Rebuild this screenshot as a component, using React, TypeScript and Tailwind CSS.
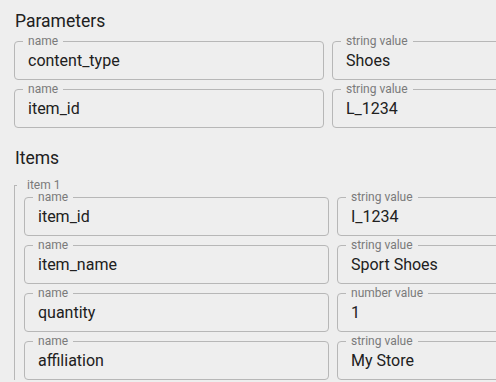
import React from 'react';

type Row = { name: string; kind: string; value: string };

const params: Row[] = [
  { name: 'content_type', kind: 'string value', value: 'Shoes' },
  { name: 'item_id', kind: 'string value', value: 'L_1234' },
];

const item: Row[] = [
  { name: 'item_id', kind: 'string value', value: 'I_1234' },
  { name: 'item_name', kind: 'string value', value: 'Sport Shoes' },
  { name: 'quantity', kind: 'number value', value: '1' },
  { name: 'affiliation', kind: 'string value', value: 'My Store' },
];

// outlined box with the label sitting in the top border
const Field: React.FC<{ label: string; value: string; width: string }> = ({ label, value, width }) => (
  <fieldset className={`${width} shrink-0 rounded-[4px] border border-[#b7b7b7] pl-[7px] pr-2 pt-[2px] pb-[6px]`}>
    <legend className="ml-px px-[5px] text-[12px] leading-[12px] text-[#7a7a7a]">{label}</legend>
    <div className="pl-[6px] text-[16px] leading-6 text-[#202020] whitespace-nowrap">{value}</div>
  </fieldset>
);

const Rows: React.FC<{ rows: Row[]; nameW: string; valueW: string }> = ({ rows, nameW, valueW }) => (
  <div className="flex flex-col gap-[3px]">
    {rows.map((r) => (
      <div key={r.name} className="flex gap-2">
        <Field label="name" value={r.name} width={nameW} />
        <Field label={r.kind} value={r.value} width={valueW} />
      </div>
    ))}
  </div>
);

export default function App() {
  return (
    <div
      className="h-[382px] w-[496px] overflow-hidden bg-[#eeeeee] pl-[14px] pt-[9px]"
      style={{ fontFamily: 'Roboto, "Liberation Sans", sans-serif' }}
    >
      <h2 className="pl-px text-[17.5px] leading-6 text-[#202020]">Parameters</h2>
      <div className="mt-[2px]">
        <Rows rows={params} nameW="w-[310px]" valueW="w-[310px]" />
      </div>

      <h2 className="mt-[18px] pl-px text-[17.5px] leading-6 text-[#202020]">Items</h2>
      <fieldset className="mt-[9px] border-0 border-l border-[#b7b7b7] pl-[9px]">
        <legend className="-ml-[9px] flex items-center">
          <span className="h-px w-[2px] bg-[#b7b7b7]" />
          <span className="ml-[10px] text-[12px] leading-[12px] text-[#7a7a7a]">item 1</span>
        </legend>
        <Rows rows={item} nameW="w-[305px]" valueW="w-[305px]" />
      </fieldset>
    </div>
  );
}
